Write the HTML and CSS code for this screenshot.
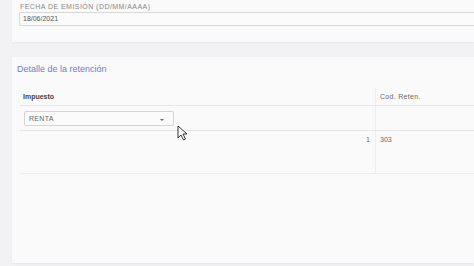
FILE: index.html
```html
<!DOCTYPE html>
<html lang="es">
<head>
  <meta charset="UTF-8">
  <title>Retención</title>
  <link rel="stylesheet" href="styles.css">
</head>
<body>
  <div class="page">
    <div class="card card-top">
      <label class="field-label">Fecha de emisión (DD/MM/AAAA)</label>
      <div class="input">18/06/2021</div>
    </div>

    <div class="card card-detail">
      <h2>Detalle de la retención</h2>

      <!-- Tabla de impuestos -->
      <div class="table">
        <div class="row head">
          <div class="cell">Impuesto</div>
          <div class="cell cell-code">Cod. Reten.</div>
        </div>
        <div class="row">
          <div class="cell">
            <div class="select"><span>RENTA</span><span class="caret"></span></div>
          </div>
          <div class="cell cell-code"></div>
        </div>
        <div class="row tall">
          <div class="cell cell-num">1</div>
          <div class="cell cell-code">303</div>
        </div>
      </div>
    </div>
  </div>

  <svg class="cursor" width="11" height="16" viewBox="0 0 11 16">
    <path d="M1 1 L1 13 L4 10 L6.5 15 L8.5 14 L6 9 L10 9 Z" fill="#fff" stroke="#333" stroke-width="1"/>
  </svg>
</body>
</html>
```

FILE: styles.css
```css
body {
  margin: 0;
  font-family: 'Liberation Sans', Arial, sans-serif;
  background: #f2f2f5;
  color: #555;
  width: 474px;
  height: 266px;
  overflow: hidden;
}
.page {
  padding-left: 12px;
}
.card {
  background: #fafafa;
  box-shadow: 0 1px 2px rgba(0, 0, 0, 0.06);
}
.card-top {
  height: 42px;
  padding: 3px 0 0 8px;
  box-sizing: border-box;
}
.field-label {
  display: block;
  font-size: 7px;
  letter-spacing: 0.45px;
  text-transform: uppercase;
  color: #888;
  line-height: 8px;
}
.input {
  margin-top: 1px;
  margin-left: -1px;
  height: 12px;
  border: 1px solid #d8d8d8;
  border-right: none;
  border-radius: 2px 0 0 2px;
  background: #fbfbfb;
  font-size: 7px;
  line-height: 12px;
  padding-left: 3px;
  color: #555;
}
.card-detail {
  margin-top: 15px;
  height: 206px;
  padding: 6px 0 0 5px;
  box-sizing: border-box;
}
h2 {
  margin: 0;
  font-size: 9px;
  font-weight: normal;
  color: #6b82c2;
  line-height: 12px;
}
.table {
  margin: 13px 0 0 3px;
  border-bottom: 1px solid #ececee;
}
.row {
  display: flex;
  border-bottom: 1px solid #e6e6e8;
}
.row:last-child {
  border-bottom: none;
}
.cell {
  width: 355px;
  padding: 3px 0 0 3px;
  font-size: 7px;
  line-height: 9px;
  color: #666;
}
.cell-code {
  flex: 1;
  border-left: 1px solid #eeeeef;
  padding-left: 4px;
}
.head .cell {
  font-weight: bold;
  color: #444;
  padding-top: 4px;
  box-sizing: border-box;
  height: 17px;
}
.head .cell-code {
  font-weight: normal;
  color: #666;
  letter-spacing: 0.3px;
}
.row:nth-child(2) .cell {
  height: 24px;
  box-sizing: border-box;
  padding: 5px 0 0 4px;
}
.select {
  width: 150px;
  height: 15px;
  border: 1px solid #d4d4d6;
  border-radius: 2px;
  background: #fbfbfb;
  display: flex;
  justify-content: space-between;
  align-items: center;
  padding: 0 9px 0 4px;
  box-sizing: border-box;
  font-size: 7px;
  letter-spacing: 0.3px;
  color: #666;
}
.caret {
  width: 0;
  height: 0;
  border-left: 2px solid transparent;
  border-right: 2px solid transparent;
  border-top: 2px solid #666;
  margin-top: 3px;
}
.tall .cell {
  height: 42px;
  box-sizing: border-box;
  padding-top: 4px;
}
.cell-num {
  text-align: right;
  padding-right: 5px;
  box-sizing: border-box;
}
.cursor {
  position: absolute;
  left: 177px;
  top: 125px;
}
```
